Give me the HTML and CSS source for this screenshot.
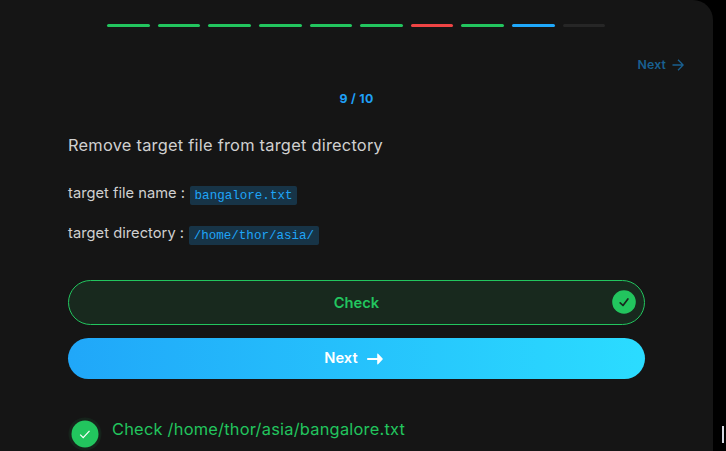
FILE: index.html
```html
<!DOCTYPE html>
<html lang="en">
<head>
<meta charset="utf-8">
<title>Task 9</title>
<link rel="stylesheet" href="styles.css">
</head>
<body>
<main class="panel">
  <div class="progress">
    <span class="step done"></span><span class="step done"></span><span class="step done"></span><span class="step done"></span><span class="step done"></span><span class="step done"></span><span class="step failed"></span><span class="step done"></span><span class="step current"></span><span class="step"></span>
  </div>
  <div class="skip"><span>Next</span>
    <svg width="12" height="12" viewBox="0 0 12 12" fill="none" stroke="currentColor" stroke-width="1.3"><path d="M.5 6h10.7M6 .8 11.2 6 6 11.2"/></svg>
  </div>
  <div class="counter">9 / 10</div>
  <div class="content">
    <h1 class="title">Remove target file from target directory</h1>
    <p class="detail">target file name : <code>bangalore.txt</code></p>
    <p class="detail">target directory : <code>/home/thor/asia/</code></p>
    <button class="button check">Check
      <svg class="badge" width="24" height="24" viewBox="0 0 24 24" fill="none"><circle cx="12" cy="12" r="11.8" fill="#22c55e"/><path d="m8.2 12.8 2.8 2.7 4.9-6.6" stroke="#18291e" stroke-width="1.7" stroke-linecap="round" stroke-linejoin="round"/></svg>
    </button>
    <button class="button next"><span>Next</span>
      <svg width="16" height="12" viewBox="0 0 16 12"><path d="M.8 5h9.4V1.1c0-.6.5-.8.9-.4l4.5 4.7c.3.3.3.8 0 1.1l-4.5 4.7c-.4.4-.9.2-.9-.4V7H.8C.3 7 0 6.6 0 6s.3-1 .8-1Z" fill="#fff"/></svg>
    </button>
    <div class="result">
      <svg width="34" height="34" viewBox="0 0 34 34" fill="none"><circle cx="17" cy="17" r="16.5" fill="#16231b"/><circle cx="17" cy="17" r="13.5" fill="#22c55e"/><path d="m12.2 17.7 3 3 6.3-6.8" stroke="#fff" stroke-width="1.2"/></svg>
      <span>Check /home/thor/asia/bangalore.txt</span>
    </div>
  </div>
</main>
<span class="caret"></span>
</body>
</html>
```

FILE: styles.css
```css
* { box-sizing: border-box; }
body {
  margin: 0;
  height: 451px;
  overflow: hidden;
  background: #000;
  font-family: Inter, sans-serif;
  font-optical-sizing: none;
  color: #d0d0d0;
}
.panel {
  width: 713px;
  height: 451px;
  overflow: hidden;
  background: #151515;
  border-top-right-radius: 20px;
}
.progress {
  display: flex;
  gap: 8px;
  width: 498px;
  margin: 24px 0 0 107.2px;
}
.step { flex: 1; height: 3px; border-radius: 2px; background: #262626; }
.done { background: #22c55e; }
.failed { background: #ef4444; }
.current { background: #1fa8fb; }
.skip {
  display: flex;
  justify-content: flex-end;
  align-items: center;
  gap: 6px;
  height: 20px;
  margin-top: 27px;
  padding-right: 29px;
  color: #196091;
  font-size: 12.3px;
  font-weight: 600;
  letter-spacing: .15px;
}
.skip svg { margin-top: 2px; }
.counter {
  height: 16px;
  margin-top: 17px;
  color: #1fa0f7;
  font-size: 12.3px;
  font-weight: 700;
  line-height: 16px;
  letter-spacing: .3px;
  text-align: center;
}
.content { padding: 0 68px; }
.title {
  margin: 26px 0 0;
  height: 24px;
  font-size: 16.4px;
  font-weight: 400;
  line-height: 24px;
  letter-spacing: .24px;
  white-space: nowrap;
}
.detail {
  margin: 24px 0 0;
  height: 24px;
  font-size: 14.7px;
  line-height: 24px;
  letter-spacing: .01px;
  white-space: nowrap;
}
.detail + .detail { margin-top: 16px; }
.detail + .detail + .detail, .title + .detail + .detail { letter-spacing: .03px; }
code {
  position: relative;
  left: .4px;
  top: 1px;
  padding: 3px 5px 2px;
  border-radius: 2px;
  background: #173447;
  color: #1fa5f8;
  font-family: "Liberation Mono", monospace;
  font-size: 12.55px;
  letter-spacing: 0;
}
.button {
  display: flex;
  align-items: center;
  justify-content: center;
  position: relative;
  width: 577px;
  padding: 0;
  border: 0;
  border-radius: 23px;
  font: 600 14.7px Inter, sans-serif;
}
.check {
  height: 45px;
  margin-top: 35px;
  border: 1px solid #22c55e;
  background: #18291e;
  color: #22c55e;
}
.badge { position: absolute; right: 7.7px; top: 9.4px; }
.next {
  gap: 9px;
  height: 41px;
  margin-top: 13px;
  padding-right: 6px;
  background: linear-gradient(90deg, #20a7f9, #2bdcff);
  color: #fff;
}
.next span { margin-top: -1px; }
.result {
  display: flex;
  gap: 10.5px;
  margin: 38px 0 0 -.5px;
  color: #22c55e;
  font-size: 16.4px;
  line-height: 24px;
  letter-spacing: .23px;
  white-space: nowrap;
}
.result svg { flex: none; }
.caret {
  position: absolute;
  left: 722px;
  top: 426px;
  width: 2px;
  height: 17px;
  background: #d4d7e0;
}
```
